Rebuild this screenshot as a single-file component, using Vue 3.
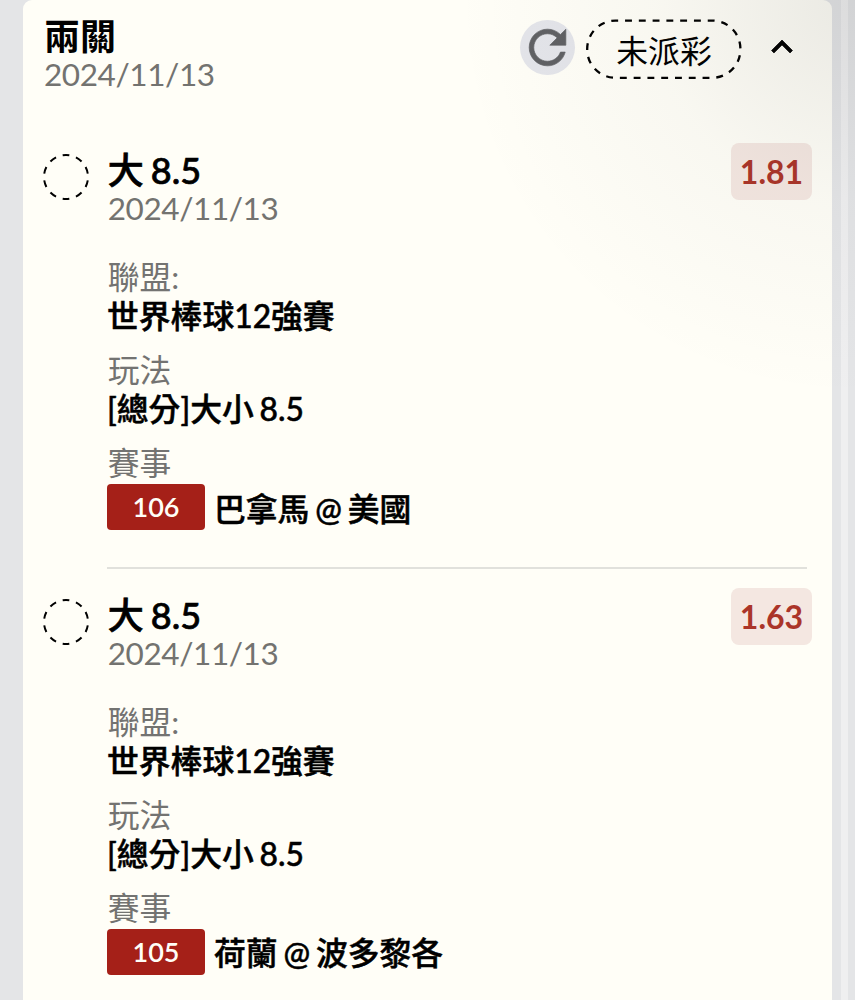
<template>
  <div class="page">
    <div class="card">
      <header class="head">
        <div class="info">
          <div class="title">兩關</div>
          <div class="date">2024/11/13</div>
        </div>
        <button class="refresh" type="button">
          <svg width="55" height="55" viewBox="0 0 24 24">
            <path d="M17.65 6.35C16.2 4.9 14.21 4 12 4c-4.42 0-7.99 3.58-7.99 8s3.57 8 7.99 8c3.73 0 6.84-2.55 7.73-6h-2.08c-.82 2.33-3.04 4-5.65 4-3.31 0-6-2.69-6-6s2.69-6 6-6c1.66 0 3.14.69 4.22 1.78L13 11h7V4l-2.35 2.35z" />
          </svg>
        </button>
        <div class="status">
          <svg class="outline" width="156" height="60" viewBox="0 0 156 60">
            <rect x="1.2" y="1.6" width="153.2" height="57.2" rx="28.2" pathLength="270" />
          </svg>
          <span>未派彩</span>
        </div>
        <svg class="arrow" width="42" height="42" viewBox="0 0 24 24">
          <path d="M12 8l-6 6 1.41 1.41L12 10.83l4.59 4.58L18 14z" />
        </svg>
      </header>

      <section class="bet" v-for="bet in bets" :key="bet.num">
        <svg class="circle" width="48" height="48" viewBox="0 0 48 48">
          <circle cx="24" cy="24" r="22" pathLength="100" />
        </svg>
        <div class="detail">
          <div class="title">{{ bet.pick }}</div>
          <div class="date">{{ bet.date }}</div>
          <div class="group first">
            <div class="label">聯盟:</div>
            <div class="value">{{ bet.league }}</div>
          </div>
          <div class="group">
            <div class="label">玩法</div>
            <div class="value">{{ bet.play }}</div>
          </div>
          <div class="group">
            <div class="label">賽事</div>
            <div class="match">
              <span class="num">{{ bet.num }}</span>
              <span class="value">{{ bet.match }}</span>
            </div>
          </div>
        </div>
        <div class="odds">{{ bet.odds }}</div>
      </section>
    </div>
    <div class="edge"></div>
    <div class="shade"></div>
  </div>
</template>

<script setup>

  const bets = [
    { num: 106, pick: '大 8.5', date: '2024/11/13', league: '世界棒球12強賽', play: '[總分]大小 8.5', match: '巴拿馬 @ 美國', odds: '1.81' },
    { num: 105, pick: '大 8.5', date: '2024/11/13', league: '世界棒球12強賽', play: '[總分]大小 8.5', match: '荷蘭 @ 波多黎各', odds: '1.63' }
  ]

</script>

<style>
  body {
    background-color: #e4e5e8;
  }
</style>

<style scoped>

  .page {
    position: relative;
    display: flex;
    height: 1000px;
    padding-left: 23px;
    box-sizing: border-box;
    overflow: hidden;
    background-color: #e4e5e7;
    font-family: Lato, "Noto Sans CJK TC", sans-serif;
    color: #000;
  }

  .card {
    width: 809px;
    height: 1000px;
    box-sizing: border-box;
    background-color: #fffef7;
    border-radius: 9px 9px 0 0;
  }

  .edge {
    width: 7px;
    margin-left: 9px;
    background-color: #efeff0;
  }

  /* soft shadow falling from the top right corner */
  .shade {
    position: absolute;
    inset: 0;
    pointer-events: none;
    background: radial-gradient(ellipse 400px 400px at 100% 0, rgba(50, 50, 50, 0.1), rgba(50, 50, 50, 0.03) 50%, rgba(50, 50, 50, 0));
  }

  .head {
    display: flex;
    align-items: flex-start;
    height: 132px;
    padding: 18px 29px 0 21px;
    box-sizing: border-box;
  }

  .info {
    flex: 1;
  }

  .title {
    height: 37px;
    line-height: 37px;
    font-size: 36px;
    font-weight: 700;
    word-spacing: -2px;
    white-space: nowrap;
  }

  .date {
    height: 38px;
    line-height: 38px;
    font-size: 31.5px;
    letter-spacing: -0.4px;
    color: #737370;
  }

  .refresh {
    width: 55px;
    height: 55px;
    margin: 2px 11px 0 0;
    padding: 0;
    border: 0;
    border-radius: 50%;
    background-color: #e4e5ea;
  }
  .refresh svg {
    display: block;
    fill: #606164;
    stroke: #606164;
    stroke-width: 0.3;
  }

  .status {
    position: relative;
    display: flex;
    align-items: center;
    justify-content: center;
    width: 156px;
    height: 60px;
    margin-top: 1px;
    font-size: 31.8px;
  }
  .outline {
    position: absolute;
    inset: 0;
  }
  .outline rect {
    fill: none;
    stroke: #000;
    stroke-width: 2.3;
    stroke-dasharray: 5 5;
    stroke-dashoffset: 3;
  }

  .arrow {
    margin: 8px 0 0 19px;
    stroke: #000;
    stroke-width: 0.4;
  }

  .bet {
    display: flex;
    align-items: flex-start;
    height: 444.5px;
    padding: 20px 20px 0 19px;
    box-sizing: border-box;
  }

  .circle {
    flex: none;
    margin: 1px 17px 0 0;
  }
  .circle circle {
    fill: none;
    stroke: #000;
    stroke-width: 2;
    stroke-dasharray: 5 5;
    stroke-dashoffset: -2.5;
  }

  .detail {
    flex: 1;
    height: 417px;
    box-sizing: border-box;
    border-bottom: 2px solid #e1e1dc;
    margin-right: -76px;
  }
  .bet:last-child .detail {
    border-bottom: 0;
  }
  .detail .title {
    padding-left: 0.7px;
    font-weight: 500;
    -webkit-text-stroke: 0.7px #000;
  }
  .detail .date,
  .label {
    padding-left: 0.7px;
  }

  .group {
    margin-top: 16px;
  }
  .group.first {
    margin-top: 31px;
  }

  .label {
    height: 39px;
    line-height: 39px;
    font-size: 31.8px;
    font-weight: 400;
    color: #737371;
  }

  .value {
    height: 38px;
    line-height: 38px;
    font-size: 31.8px;
    font-weight: 500;
    word-spacing: -2.2px;
    white-space: nowrap;
    -webkit-text-stroke: 0.5px #000;
  }

  .match {
    display: flex;
    align-items: center;
    gap: 9px;
    padding-top: 1px;
  }
  .match .value {
    padding-top: 3px;
  }

  .num {
    width: 98px;
    height: 46px;
    border-radius: 4px;
    background-color: #a52018;
    color: #fffef7;
    font-size: 27px;
    font-weight: 600;
    line-height: 46px;
    text-align: center;
  }

  .odds {
    width: 81px;
    height: 57px;
    margin-top: -9px;
    border-radius: 8px;
    background-color: #f4e7e1;
    color: #ab3529;
    font-size: 32px;
    font-weight: 700;
    line-height: 58px;
    text-align: center;
  }

</style>
